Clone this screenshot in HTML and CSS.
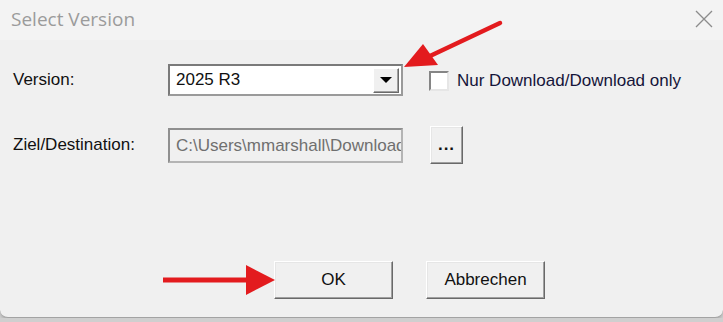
FILE: index.html
```html
<!DOCTYPE html>
<html lang="en">
<head>
  <meta charset="UTF-8">
  <meta name="viewport" content="width=device-width, initial-scale=1.0">
  <title>Select Version</title>
  <link rel="stylesheet" href="styles.css">
</head>
<body>

  <div class="dialog">
    <div class="titlebar">
      <span class="title">Select Version</span>
      <svg class="close" width="18" height="18" viewBox="0 0 18 18">
        <path d="M1 1 L17 17 M17 1 L1 17" stroke="#8c8c8c" stroke-width="1.3" fill="none"/>
      </svg>
    </div>

    <div class="content">
      <div class="row">
        <label class="label" for="version">Version:</label>
        <div class="combo" id="version">
          <span class="combo-value">2025 R3</span>
          <span class="combo-btn"><span class="tri"></span></span>
        </div>
        <label class="check">
          <span class="box"></span>
          <span>Nur Download/Download only</span>
        </label>
      </div>

      <div class="row row-dest">
        <label class="label" for="dest">Ziel/Destination:</label>
        <div class="textbox" id="dest"><span class="path">C:\Users\mmarshall\Downloads</span></div>
        <button class="btn btn-browse" type="button">...</button>
      </div>

      <div class="actions">
        <button class="btn btn-action" type="button">OK</button>
        <button class="btn btn-action" type="button">Abbrechen</button>
      </div>
    </div>

    <!-- annotation arrows drawn on top of the screenshot -->
    <svg class="marks" width="723" height="318" viewBox="0 0 723 318">
      <line x1="430" y1="56" x2="500" y2="23" stroke="#e31b1e" stroke-width="4.5" stroke-linecap="round"/>
      <polygon points="404,67 423,44 438,65" fill="#e31b1e"/>
      <line x1="163" y1="280" x2="250" y2="280" stroke="#e31b1e" stroke-width="5"/>
      <polygon points="246,265 246,295 275,280" fill="#e31b1e"/>
    </svg>
  </div>

</body>
</html>
```

FILE: styles.css
```css
body {
  margin: 0;
  background-color: #cfcfcf;
  font-family: "Liberation Sans", Arial, sans-serif;
  font-size: 17px;
  color: #111;
}
.dialog {
  position: relative;
  width: 723px;
  height: 317px;
  background-color: #f0f0f0;
  border-bottom: 1px solid #a3a3a3;
  border-radius: 0 0 8px 8px;
  box-shadow: 0 2px 3px rgba(0, 0, 0, 0.15);
  overflow: hidden;
}
.titlebar {
  height: 40px;
  background-color: #f3f3f3;
  display: flex;
  align-items: center;
  justify-content: space-between;
  padding: 0 10px 0 11px;
}
.title {
  font-family: "Open Sans", "Noto Sans", sans-serif;
  font-size: 19px;
  color: #9b9b9b;
  margin-top: -2px;
}
.close {
  margin-top: -2px;
}
.content {
  padding: 24px 0 0 13px;
}
.row {
  display: flex;
  align-items: center;
  height: 32px;
}
.label {
  width: 155px;
}
.combo {
  box-sizing: border-box;
  width: 235px;
  height: 32px;
  background-color: #fff;
  border: 2px solid;
  border-color: #7a7a7a #9a9a9a #9a9a9a #7a7a7a;
  display: flex;
  align-items: center;
  justify-content: space-between;
  padding: 0 2px 0 6px;
}
.combo-btn {
  box-sizing: border-box;
  width: 26px;
  height: 25px;
  background-color: #f0f0f0;
  border: 1px solid;
  border-color: #fff #6a6a6a #6a6a6a #fff;
  box-shadow: inset -1px -1px #a0a0a0;
  display: flex;
  align-items: center;
  justify-content: center;
}
.tri {
  width: 0;
  height: 0;
  border-left: 6px solid transparent;
  border-right: 6px solid transparent;
  border-top: 6px solid #000;
}
.check {
  display: flex;
  align-items: center;
  margin-left: 26px;
  margin-top: 2px;
  color: #15153a;
}
.box {
  box-sizing: border-box;
  width: 20px;
  height: 20px;
  background-color: #fff;
  border: 2px solid;
  border-color: #858585 #e6e6e6 #e6e6e6 #858585;
  margin-right: 8px;
}
.row-dest {
  margin-top: 31px;
  height: 36px;
}
.textbox {
  box-sizing: border-box;
  width: 235px;
  height: 35px;
  border: 2px solid;
  border-color: #8f8f8f #b4b4b4 #b4b4b4 #8f8f8f;
  background-color: #f0f0f0;
  color: #6f6f6f;
  padding: 6px 0 0 6px;
  white-space: nowrap;
  overflow: hidden;
}
.btn {
  box-sizing: border-box;
  font-family: "Liberation Sans", Arial, sans-serif;
  font-size: 17px;
  color: #111;
  background-color: #f0f0f0;
  border: 1px solid;
  border-color: #fff #696969 #696969 #fff;
  box-shadow: inset -1px -1px #a0a0a0, inset 1px 1px #e6e6e6;
  padding: 0;
}
.btn-browse {
  width: 33px;
  height: 38px;
  margin-left: 27px;
  font-weight: bold;
  letter-spacing: 1px;
}
.actions {
  display: flex;
  gap: 33px;
  margin-top: 98px;
  padding-left: 261px;
}
.btn-action {
  width: 119px;
  height: 38px;
}
.marks {
  position: absolute;
  left: 0;
  top: 0;
  pointer-events: none;
}
```
